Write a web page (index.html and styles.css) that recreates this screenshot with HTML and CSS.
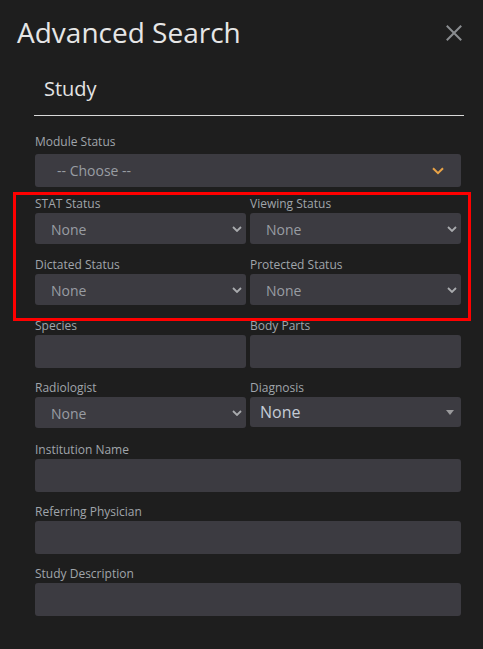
FILE: index.html
```html
<!DOCTYPE html>
<html lang="en">
<head>
<meta charset="utf-8">
<title>Advanced Search</title>
<link rel="stylesheet" href="styles.css">
</head>
<body>
<div class="dialog">
  <header class="header">
    <h1 class="title">Advanced Search</h1>
    <svg class="close" width="16" height="16" viewBox="0 0 16 16" aria-label="Close">
      <path d="M1.5 1.5 L14.5 14.5 M14.5 1.5 L1.5 14.5" stroke="#8a8d90" stroke-width="2" fill="none" stroke-linecap="square"/>
    </svg>
  </header>

  <div class="tabs">
    <div class="tab">Study</div>
  </div>

  <div class="form">
    <div class="row row-module">
      <div class="field">
        <div class="label label-module">Module Status</div>
        <div class="select select-module">
          <span class="value">-- Choose --</span>
          <svg class="chev-orange" width="12" height="8" viewBox="0 0 12 8"><path d="M1 1.2 L6 6.2 L11 1.2" stroke="#eaa346" stroke-width="2" fill="none"/></svg>
        </div>
      </div>
    </div>

    <div class="group">
      <div class="row row-two row-sel">
        <div class="field">
          <div class="label">STAT Status</div>
          <div class="select"><span class="value">None</span><svg class="chev" width="10" height="6" viewBox="0 0 10 6"><path d="M1 1 L5 5 L9 1" stroke="#a9abae" stroke-width="1.8" fill="none"/></svg></div>
        </div>
        <div class="field">
          <div class="label">Viewing Status</div>
          <div class="select"><span class="value">None</span><svg class="chev" width="10" height="6" viewBox="0 0 10 6"><path d="M1 1 L5 5 L9 1" stroke="#a9abae" stroke-width="1.8" fill="none"/></svg></div>
        </div>
      </div>
      <div class="row row-two">
        <div class="field">
          <div class="label">Dictated Status</div>
          <div class="select"><span class="value">None</span><svg class="chev" width="10" height="6" viewBox="0 0 10 6"><path d="M1 1 L5 5 L9 1" stroke="#a9abae" stroke-width="1.8" fill="none"/></svg></div>
        </div>
        <div class="field">
          <div class="label">Protected Status</div>
          <div class="select"><span class="value">None</span><svg class="chev" width="10" height="6" viewBox="0 0 10 6"><path d="M1 1 L5 5 L9 1" stroke="#a9abae" stroke-width="1.8" fill="none"/></svg></div>
        </div>
      </div>
    </div>

    <div class="row row-two row-inp">
      <div class="field">
        <div class="label">Species</div>
        <div class="input"></div>
      </div>
      <div class="field">
        <div class="label">Body Parts</div>
        <div class="input"></div>
      </div>
    </div>

    <div class="row row-two row-diag">
      <div class="field">
        <div class="label">Radiologist</div>
        <div class="select"><span class="value">None</span><svg class="chev" width="10" height="6" viewBox="0 0 10 6"><path d="M1 1 L5 5 L9 1" stroke="#a9abae" stroke-width="1.8" fill="none"/></svg></div>
      </div>
      <div class="field">
        <div class="label">Diagnosis</div>
        <div class="select select-diag"><span class="value value-diag">None</span><svg class="caret" width="8" height="5" viewBox="0 0 8 5"><path d="M0 0 L8 0 L4 5 Z" fill="#9a9a9c"/></svg></div>
      </div>
    </div>

    <div class="row row-inp">
      <div class="field">
        <div class="label">Institution Name</div>
        <div class="input"></div>
      </div>
    </div>

    <div class="row row-inp">
      <div class="field">
        <div class="label">Referring Physician</div>
        <div class="input"></div>
      </div>
    </div>

    <div class="row">
      <div class="field">
        <div class="label">Study Description</div>
        <div class="input"></div>
      </div>
    </div>
  </div>
</div>
</body>
</html>
```

FILE: styles.css
```css
html, body {
  margin: 0;
  padding: 0;
  background: #1e1e1e;
}

body {
  font-family: "Open Sans", "Noto Sans", sans-serif;
  width: 483px;
  height: 649px;
  overflow: hidden;
}

.dialog {
  display: flex;
  flex-direction: column;
}

.header {
  display: flex;
  justify-content: space-between;
  align-items: flex-start;
  padding: 13px 21px 0 17px;
}

.title {
  margin: 0;
  font-size: 28px;
  font-weight: 400;
  line-height: 38px;
  color: #e6e6e6;
}

.close {
  display: block;
  margin-top: 12px;
}

.tabs {
  margin: 24px 19px 0 34px;
  border-bottom: 1px solid #d9d9d9;
}

.tab {
  padding: 0 0 13px 10px;
  font-size: 20px;
  line-height: 27px;
  color: #e4e4e4;
}

.form {
  padding: 18px 22px 0 35px;
}

.row-module {
  margin-bottom: 8px;
}

.row-two {
  display: grid;
  grid-template-columns: 1fr 1fr;
  column-gap: 4px;
}

.row-sel {
  margin-bottom: 12px;
}

.row-inp {
  margin-bottom: 11px;
}

.row-diag {
  margin-bottom: 13px;
}

.group {
  position: relative;
  margin-bottom: 12px;
}

.group::after {
  content: "";
  position: absolute;
  top: -3px;
  bottom: -16px;
  left: -22px;
  right: -10px;
  border: 3px solid #ff0000;
  z-index: 2;
  pointer-events: none;
}

.label {
  font-size: 12px;
  line-height: 16px;
  color: #a0a5ab;
  padding-top: 1px;
  margin-bottom: 1px;
  white-space: nowrap;
}

.label-module {
  padding-top: 0;
  margin-bottom: 4px;
}

.select,
.input {
  background: #3c3b41;
  border-radius: 3px;
  box-sizing: border-box;
}

.select {
  height: 31px;
  display: flex;
  align-items: center;
  justify-content: space-between;
  padding: 0 4px 0 16px;
}

.input {
  height: 33px;
}

.value {
  font-size: 14px;
  line-height: 19px;
  color: #999da3;
  padding-top: 1px;
}

.chev {
  display: block;
}

.select-module {
  height: 33px;
  padding: 0 17px 0 22px;
}

.select-module .value {
  padding-top: 0;
}

.chev-orange {
  display: block;
}

.select-diag {
  height: 30px;
  padding: 0 7px 0 10px;
}

.value-diag {
  font-size: 16px;
  line-height: 22px;
  color: #c4ccd6;
  padding-top: 0;
}

.caret {
  display: block;
}
```
